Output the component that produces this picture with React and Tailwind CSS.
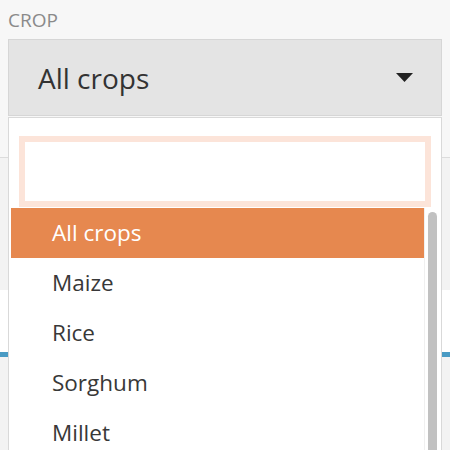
import React from 'react'

const crops = ['All crops', 'Maize', 'Rice', 'Sorghum', 'Millet', 'Wheat']

export default function App() {
  return (
    <div className="relative h-[450px] w-[450px] overflow-hidden bg-[#f7f7f7] font-['Open_Sans',sans-serif]">
      {/* Field label + select */}
      <div className="px-2 pt-[11px]">
        <div className="text-[19px] leading-none uppercase text-[#8a8a8a]">Crop</div>
        <div className="mt-[9px] flex h-[77px] items-center justify-between border border-[#d6d6d6] bg-[#e4e4e4] pl-[29px] pr-[28px]">
          <span className="text-[28px] leading-none text-[#333]">All crops</span>
          <svg width="17" height="9" viewBox="0 0 17 9">
            <path d="M0 0 H17 L8.5 9 Z" fill="#222" />
          </svg>
        </div>
      </div>

      {/* Page content behind the menu */}
      <div className="mt-[41px] border-t border-[#dcdcdc]">
        <div className="h-[132px] bg-[#f3f3f3]" />
        <div className="h-[62px] bg-white" />
        <div className="h-[5px] bg-[#4a9bc4]" />
        <div className="h-[120px] bg-[#f3f3f3]" />
      </div>

      {/* Open dropdown */}
      <div className="absolute left-2 top-[117px] h-[360px] w-[434px] border border-[#d9d9d9] bg-white">
        <div className="px-[10px] pt-[18px]">
          <div className="h-[71px] border-[6px] border-[#fce4d9] bg-white" />
        </div>
        <div className="mt-[1px] flex">
          <div className="ml-[2px] flex-1">
            {crops.map((c, i) => (
              <div
                key={c}
                className={
                  i === 0
                    ? 'flex h-[50px] items-center bg-[#e6884f] pl-[41px] text-[22.5px] text-white'
                    : 'flex h-[50px] items-center pl-[41px] text-[22.5px] text-[#383838]'
                }
              >
                {c}
              </div>
            ))}
          </div>
          <div className="w-[17px] border-l border-[#f0f0f0] bg-white pl-[3px] pt-[4px]">
            <div className="h-[300px] w-[9px] rounded-full bg-[#c1c1c1]" />
          </div>
        </div>
      </div>
    </div>
  )
}
